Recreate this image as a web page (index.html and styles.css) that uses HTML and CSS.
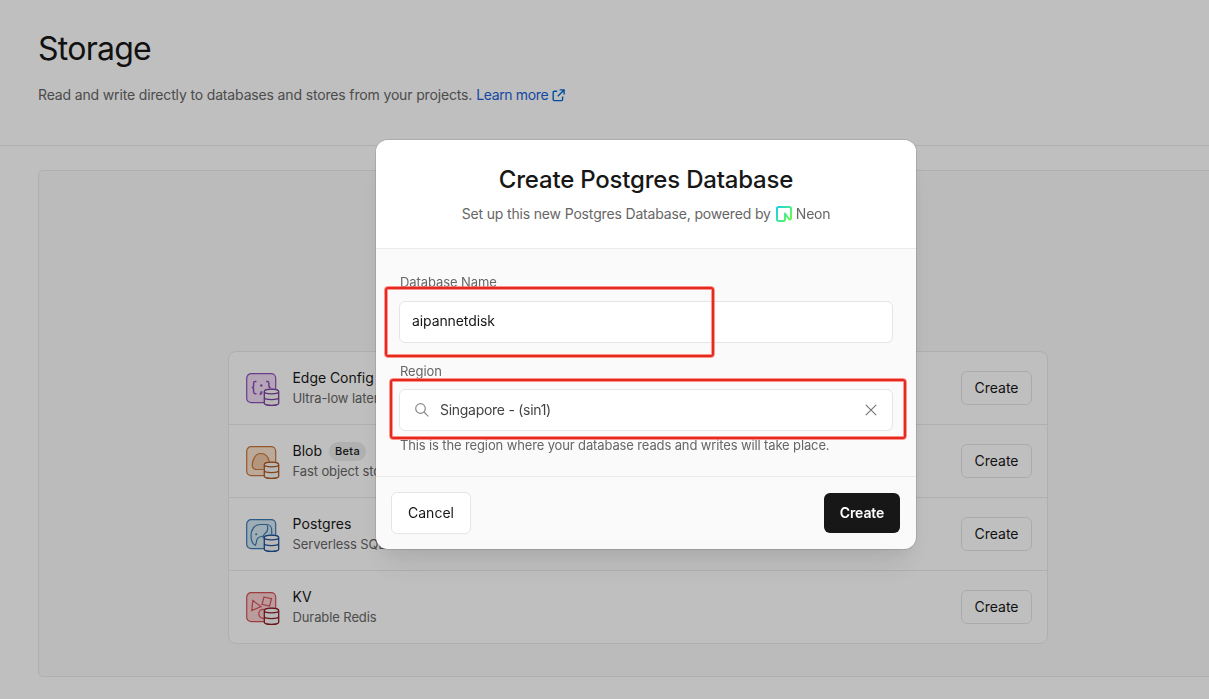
FILE: index.html
```html
<!DOCTYPE html>
<html lang="en">
<head>
<meta charset="utf-8">
<title>Storage</title>
<link rel="stylesheet" href="styles.css">
</head>
<body>
<svg class="defs" width="0" height="0" aria-hidden="true">
  <symbol id="db" viewBox="0 0 16 18"><path d="M.7 3.2C.7 1.8 3.8.8 8 .8s7.3 1 7.3 2.4v11.6c0 1.4-3.1 2.4-7.3 2.4s-7.3-1-7.3-2.4z" fill="#f6f6f6"/><path d="M.7 3.2c0 1.3 3.1 2.3 7.3 2.3s7.3-1 7.3-2.3M.7 9c0 1.3 3.1 2.3 7.3 2.3s7.3-1 7.3-2.3M.7 3.2C.7 1.8 3.8.8 8 .8s7.3 1 7.3 2.4v11.6c0 1.4-3.1 2.4-7.3 2.4s-7.3-1-7.3-2.4z" fill="none" stroke="currentColor" stroke-width="1.35"/></symbol>
</svg>
<header class="page-header">
  <h1 class="page-title">Storage</h1>
  <p class="page-sub"><span class="page-desc">Read and write directly to databases and stores from your projects.</span>
    <a class="link">Learn more</a><svg class="ext" width="13" height="13" viewBox="0 0 13 13" fill="none" stroke="#0068d6" stroke-width="1.4"><path d="M5.200 2.200H2.200c-.6 0-1 .4-1 1v7.400c0 .6.400 1 1 1h7.400c.6 0 1-.4 1-1V7.500M7.600.900h4.500v4.500M12 1L5.800 7.200"/></svg></p>
</header>
<main class="panel">
  <ul class="stores">
    <li class="store">
      <svg class="store-icon purple" width="34" height="34" viewBox="0 0 34 34" fill="none" stroke="currentColor"><rect x=".7" y=".7" width="29" height="29" rx="4.500" fill="#f0dcf5" stroke-width="1.200"/><path d="M10.500 8.500H9.300c-1.100 0-1.700.7-1.700 1.700v2.500c0 1.100-.6 1.900-1.800 1.900 1.200 0 1.800.8 1.800 1.900V19c0 1 .6 1.700 1.700 1.700h1.200M20 8.500h1.200c1.100 0 1.700.7 1.700 1.700v2.500c0 1.100.6 1.900 1.800 1.900" stroke-width="1.500"/><path d="M15.500 18.200v1.500l-1.500 2" stroke-width="2"/><circle cx="15.300" cy="12.500" r="1.200" fill="currentColor" stroke="none"/><use href="#db" x="17.500" y="15.300" width="16" height="18"/></svg>
      <div class="store-text"><div class="store-name n-edge">Edge Config</div><div class="store-desc">Ultra-low latency reads</div></div>
      <button class="btn">Create</button>
    </li>
    <li class="store">
      <svg class="store-icon orange" width="34" height="34" viewBox="0 0 34 34" fill="none" stroke="currentColor"><rect x=".7" y=".7" width="29" height="29" rx="4.500" fill="#fae3cc" stroke-width="1.200"/><path d="M17.500 23.500H10c-2.500-.5-3.800-2.200-3.800-4.500 0-4.500 3-11.500 8.400-11.500 4.800 0 7.900 3.700 8.700 8.300" fill="#f0c8a6" stroke-width="1.200"/><use href="#db" x="17.500" y="15.300" width="16" height="18"/></svg>
      <div class="store-text"><div class="store-name">Blob<span class="badge">Beta</span></div><div class="store-desc">Fast object storage</div></div>
      <button class="btn">Create</button>
    </li>
    <li class="store">
      <svg class="store-icon blue" width="34" height="34" viewBox="0 0 34 34" fill="none" stroke="currentColor"><rect x=".7" y=".7" width="29" height="29" rx="4.500" fill="#d3e8f0" stroke-width="1.200"/><path d="M17.500 17c-2.300.3-5 .8-6.300 3-1.200 1.800-.3 4.300-2 6.300C6.700 25 5 21 5 16.500 5 10.500 8.500 5.500 14.500 5.500h6c3.200 0 5.200 2.500 5.200 5.500v4.500M21 6c1.300 3 .6 6.500-2 8.500-1.800 1.500-2 3-1.800 5" stroke-width="1.200"/><circle cx="10.200" cy="15.200" r="1" fill="currentColor" stroke="none"/><use href="#db" x="17.500" y="15.300" width="16" height="18"/></svg>
      <div class="store-text"><div class="store-name n-pg">Postgres</div><div class="store-desc">Serverless SQL</div></div>
      <button class="btn">Create</button>
    </li>
    <li class="store">
      <svg class="store-icon red" width="34" height="34" viewBox="0 0 34 34" fill="none" stroke="currentColor"><rect x=".7" y=".7" width="29" height="29" rx="4.500" fill="#f8d0d2" stroke-width="1.200"/><path d="M6.800 8.500l8.200 6-9.200 4zM18 5l7.500 1.700-2 7.300-7.500-1.700zM18 17.500c-3-.7-5.200 1.500-5.200 4.300 0 2.500 2 4.800 5 4.500" stroke-width="1.200"/><use href="#db" x="17.500" y="15.300" width="16" height="18"/></svg>
      <div class="store-text"><div class="store-name">KV</div><div class="store-desc">Durable Redis</div></div>
      <button class="btn">Create</button>
    </li>
  </ul>
</main>
<div class="overlay">
  <section class="modal">
    <header class="modal-head">
      <h2 class="modal-title">Create Postgres Database</h2>
      <p class="modal-sub"><span class="modal-desc">Set up this new Postgres Database, powered by</span>
        <svg width="16" height="16" viewBox="0 0 16 16" fill="none"><defs><linearGradient id="neon" x1="0" y1="0" x2="1" y2=".65"><stop stop-color="#19cfdf"/><stop offset=".55" stop-color="#3fe7a1"/><stop offset="1" stop-color="#62f755"/></linearGradient></defs><path stroke="url(#neon)" stroke-width="2" stroke-linejoin="round" d="M9 9v4.500c0 .9-.6 1.500-1.500 1.500H2.700C1.700 15 1 14.300 1 13.300V2.700C1 1.700 1.700 1 2.700 1h10.600c1 0 1.700.7 1.700 1.700v9.600c0 1.200-1.200 1.600-2 .7L9 7.500V10"/></svg><span class="neon-name">Neon</span></p>
    </header>
    <div class="modal-body">
      <label class="label l-name">Database Name</label>
      <div class="field"><span class="db-name">aipannetdisk</span></div>
      <label class="label l-region">Region</label>
      <div class="field region"><svg width="14" height="14" viewBox="0 0 14 14" fill="none" stroke="#8a8a8a" stroke-width="1.200"><circle cx="5.500" cy="5.500" r="4.800"/><path d="M9 9l4.300 4.300"/></svg><span class="region-name">Singapore - (sin1)</span><svg width="12" height="12" viewBox="0 0 12 12" stroke="#777" stroke-width="1.200"><path d="M.8.8l10.400 10.400M11.200.8L.8 11.200"/></svg></div>
      <p class="help">This is the region where your database reads and writes will take place.</p>
    </div>
    <footer class="modal-foot"><button class="btn cancel">Cancel</button><button class="btn submit">Create</button></footer>
  </section>
  <div class="mark mark-name"></div>
  <div class="mark mark-region"></div>
</div>
</body>
</html>
```
FILE: styles.css
```css
* { box-sizing: border-box; }
html, body { height: 100%; }
body { margin: 0; overflow: hidden; background: #fff; color: #171717; font: 14px/20px Inter, "Liberation Sans", sans-serif; }
h1, h2, p, ul { margin: 0; padding: 0; }
svg { flex: none; }
.defs { position: absolute; }
.page-header { height: 146px; padding: 29px 38px 0; border-bottom: 1px solid #eaeaea; }
.page-title { font-size: 32px; line-height: 40px; font-weight: 430; letter-spacing: -.75px; }
.page-sub { display: flex; align-items: center; margin-top: 16px; color: #666; }
.page-desc { margin-right: 4px; letter-spacing: -.15px; }
.link { color: #1a62d8; letter-spacing: -.36px; }
.ext { margin-left: 4px; }
.panel { width: 1220px; height: 507px; margin: 24px 0 0 38px; padding: 180px 0 0 189px; background: #fafafa; border: 1px solid #eaeaea; border-radius: 5px; }
.stores { width: 820px; list-style: none; background: #fff; border: 1px solid #eaeaea; border-radius: 8px; }
.store { display: flex; align-items: center; height: 73px; padding: 0 15px 0 16.500px; }
.store + .store { border-top: 1px solid #eaeaea; }
.store:first-child { height: 72px; }
.store-icon { margin-right: 13px; margin-top: 3px; }
.purple { color: #8e52bb; }
.orange { color: #c9773c; }
.purple use { color: #7d429f; }
.orange use { color: #b05a20; }
.blue { color: #3b78b4; }
.blue use { color: #20549a; }
.red { color: #d45058; }
.red use { color: #8f1e27; }
.store-text { flex: 1; }
.store-name { display: flex; align-items: center; gap: 7px; height: 20px; }
.n-edge { letter-spacing: -.05px; }
.n-pg { letter-spacing: .1px; }
.store-desc { color: #666; font-size: 13px; letter-spacing: -.1px; }
.badge { padding: 0 6px; border-radius: 10px; background: #ebebeb; font-size: 11px; font-weight: 500; line-height: 19px; letter-spacing: .3px; }
.btn { height: 34px; width: 71px; padding: 0; border: 1px solid #e5e5e5; border-radius: 6px; background: #fff; color: #171717; font: inherit; }
.overlay { position: fixed; inset: 0; padding: 140px 0 0 376px; background: rgba(0, 0, 0, .25); }
.modal { width: 540px; height: 409px; border-radius: 12px; overflow: hidden; background: #fafafa; box-shadow: 0 0 0 1px rgba(0,0,0,.1), 0 8px 16px -4px rgba(0,0,0,.06), 0 24px 32px -8px rgba(0,0,0,.08); }
.modal-head { height: 109px; padding-top: 24px; background: #fff; border-bottom: 1px solid #eaeaea; text-align: center; }
.modal-title { font-size: 24px; line-height: 32px; font-weight: 500; letter-spacing: -.2px; }
.modal-sub { display: flex; align-items: center; justify-content: center; gap: 5px; margin-top: 8px; color: #666; }
.modal-desc { letter-spacing: -.16px; }
.neon-name { margin-left: -1px; letter-spacing: -.2px; }
.modal-body { height: 227px; padding: 24px 23px 0; }
.label { display: block; margin-left: 1px; color: #666; font-size: 13px; line-height: 19px; letter-spacing: -.08px; }
.field { display: flex; align-items: center; height: 42px; margin-top: 9px; padding: 0 12px 2px; background: #fff; border: 1px solid #e5e5e5; border-radius: 6px; }
.db-name { letter-spacing: -.1px; }
.l-region { margin-top: 19px; }
.l-region + .field { margin-top: 8px; }
.region { padding: 0 15px; color: #444; }
.region-name { flex: 1; margin-left: 11px; letter-spacing: -.28px; }
.help { margin: 4px 0 0 1px; color: #666; font-size: 13px; letter-spacing: -.13px; }
.modal-foot { display: flex; justify-content: space-between; align-items: center; height: 73px; padding: 0 16px 0 15px; border-top: 1px solid #eaeaea; }
.cancel { width: 80px; height: 42px; }
.submit { width: 76px; height: 40px; background: #171717; border: 0; color: #fff; font-weight: 600; letter-spacing: -.1px; }
.mark { position: absolute; border: 2px solid #e32a20; border-radius: 3px; box-shadow: 0 0 0 .7px #ff6e64, inset 0 0 0 .7px #ff6e64; }
.mark-name { left: 385px; top: 287px; width: 329px; height: 70px; }
.mark-region { left: 390px; top: 379px; width: 516px; height: 60px; }
```
